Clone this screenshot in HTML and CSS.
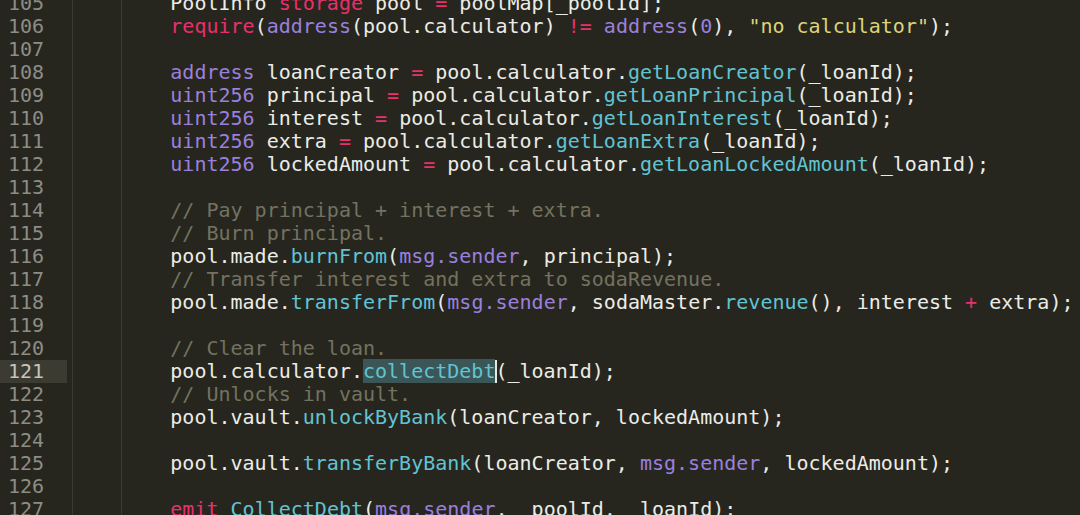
FILE: index.html
```html
<!DOCTYPE html>
<html>
<head>
<meta charset="utf-8">
<link rel="stylesheet" href="styles.css">
</head>
<body>
<div class="editor">
  <div class="gutter">
    <div class="ln">105</div>
    <div class="ln">106</div>
    <div class="ln">107</div>
    <div class="ln">108</div>
    <div class="ln">109</div>
    <div class="ln">110</div>
    <div class="ln">111</div>
    <div class="ln">112</div>
    <div class="ln">113</div>
    <div class="ln">114</div>
    <div class="ln">115</div>
    <div class="ln">116</div>
    <div class="ln">117</div>
    <div class="ln">118</div>
    <div class="ln">119</div>
    <div class="ln">120</div>
    <div class="ln active">121</div>
    <div class="ln">122</div>
    <div class="ln">123</div>
    <div class="ln">124</div>
    <div class="ln">125</div>
    <div class="ln">126</div>
    <div class="ln">127</div>
  </div>
  <div class="code">
    <div class="line">        PoolInfo <span class="kw">storage</span> pool <span class="kw">=</span> poolMap[_poolId];</div>
    <div class="line">        <span class="kw">require</span>(<span class="ty">address</span>(pool.calculator) <span class="kw">!=</span> <span class="ty">address</span>(<span class="ty">0</span>), <span class="str">"no calculator"</span>);</div>
    <div class="line"> </div>
    <div class="line">        <span class="ty">address</span> loanCreator <span class="kw">=</span> pool.calculator.<span class="fn">getLoanCreator</span>(_loanId);</div>
    <div class="line">        <span class="ty">uint256</span> principal <span class="kw">=</span> pool.calculator.<span class="fn">getLoanPrincipal</span>(_loanId);</div>
    <div class="line">        <span class="ty">uint256</span> interest <span class="kw">=</span> pool.calculator.<span class="fn">getLoanInterest</span>(_loanId);</div>
    <div class="line">        <span class="ty">uint256</span> extra <span class="kw">=</span> pool.calculator.<span class="fn">getLoanExtra</span>(_loanId);</div>
    <div class="line">        <span class="ty">uint256</span> lockedAmount <span class="kw">=</span> pool.calculator.<span class="fn">getLoanLockedAmount</span>(_loanId);</div>
    <div class="line"> </div>
    <div class="line">        <span class="cm">// Pay principal + interest + extra.</span></div>
    <div class="line">        <span class="cm">// Burn principal.</span></div>
    <div class="line">        pool.made.<span class="fn">burnFrom</span>(<span class="ty">msg.sender</span>, principal);</div>
    <div class="line">        <span class="cm">// Transfer interest and extra to sodaRevenue.</span></div>
    <div class="line">        pool.made.<span class="fn">transferFrom</span>(<span class="ty">msg.sender</span>, sodaMaster.<span class="fn">revenue</span>(), interest <span class="kw">+</span> extra);</div>
    <div class="line"> </div>
    <div class="line">        <span class="cm">// Clear the loan.</span></div>
    <div class="line">        pool.calculator.<span class="fn sel">collectDebt</span><span class="caret"></span>(_loanId);</div>
    <div class="line">        <span class="cm">// Unlocks in vault.</span></div>
    <div class="line">        pool.vault.<span class="fn">unlockByBank</span>(loanCreator, lockedAmount);</div>
    <div class="line"> </div>
    <div class="line">        pool.vault.<span class="fn">transferByBank</span>(loanCreator, <span class="ty">msg.sender</span>, lockedAmount);</div>
    <div class="line"> </div>
    <div class="line">        <span class="kw">emit</span> <span class="fn">CollectDebt</span>(<span class="ty">msg.sender</span>, _poolId, _loanId);</div>
  </div>
</div>
</body>
</html>
```

FILE: styles.css
```css
html, body {
  margin: 0;
  padding: 0;
  background: #26261f;
  overflow: hidden;
}

.editor {
  display: flex;
  margin-top: -8px;
  font-family: "DejaVu Sans Mono", monospace;
  font-size: 20px;
  line-height: 23px;
  color: #ecece6;
}

.gutter {
  width: 67px;
  flex: none;
  color: #8d8d86;
}

.ln {
  padding-left: 8px;
  height: 23px;
}

.ln.active {
  background: #3c3b31;
  color: #c4c4bb;
}

.code {
  flex: 1;
  padding-left: 7px;
  background-image:
    linear-gradient(#3a3a32, #3a3a32),
    linear-gradient(#3a3a32, #3a3a32);
  background-size: 1px 100%, 1px 100%;
  background-position: 5px 0, 54px 0;
  background-repeat: no-repeat;
}

.line {
  white-space: pre;
  height: 23px;
}

.kw { color: #e8306d; }
.ty { color: #9a80dc; }
.fn { color: #62c3d3; }
.str { color: #ddd37a; }
.cm { color: #74725f; }

.sel {
  background: #3b5656;
}

.caret {
  display: inline-block;
  width: 2px;
  height: 23px;
  margin-right: -2px;
  vertical-align: top;
  background: #e8e8e2;
}
```
